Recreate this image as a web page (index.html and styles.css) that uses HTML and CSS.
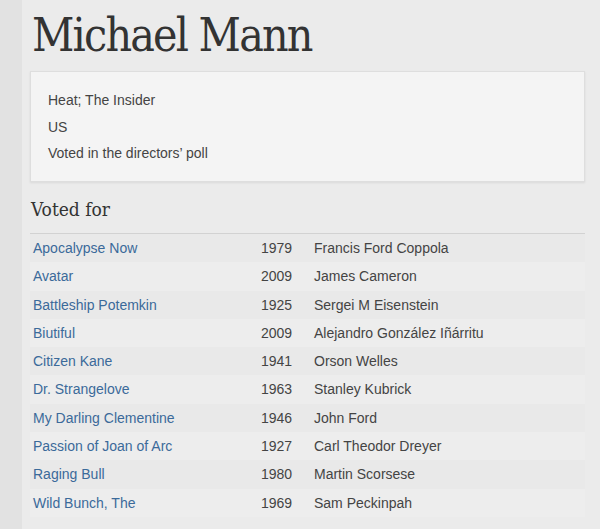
FILE: index.html
```html
<!DOCTYPE html>
<html lang="en">
<head>
  <meta charset="UTF-8">
  <meta name="viewport" content="width=device-width, initial-scale=1.0">
  <title>Michael Mann</title>
  <link rel="stylesheet" href="styles.css">
</head>
<body>
  <div class="page">
    <h1>Michael Mann</h1>

    <div class="info">
      <p>Heat; The Insider</p>
      <p>US</p>
      <p>Voted in the directors’ poll</p>
    </div>

    <h2>Voted for</h2>

    <table class="votes">
      <tr><td class="title"><a href="#">Apocalypse Now</a></td><td class="year">1979</td><td>Francis Ford Coppola</td></tr>
      <tr><td class="title"><a href="#">Avatar</a></td><td class="year">2009</td><td>James Cameron</td></tr>
      <tr><td class="title"><a href="#">Battleship Potemkin</a></td><td class="year">1925</td><td>Sergei M Eisenstein</td></tr>
      <tr><td class="title"><a href="#">Biutiful</a></td><td class="year">2009</td><td>Alejandro González Iñárritu</td></tr>
      <tr><td class="title"><a href="#">Citizen Kane</a></td><td class="year">1941</td><td>Orson Welles</td></tr>
      <tr><td class="title"><a href="#">Dr. Strangelove</a></td><td class="year">1963</td><td>Stanley Kubrick</td></tr>
      <tr><td class="title"><a href="#">My Darling Clementine</a></td><td class="year">1946</td><td>John Ford</td></tr>
      <tr><td class="title"><a href="#">Passion of Joan of Arc</a></td><td class="year">1927</td><td>Carl Theodor Dreyer</td></tr>
      <tr><td class="title"><a href="#">Raging Bull</a></td><td class="year">1980</td><td>Martin Scorsese</td></tr>
      <tr><td class="title"><a href="#">Wild Bunch, The</a></td><td class="year">1969</td><td>Sam Peckinpah</td></tr>
    </table>
  </div>
</body>
</html>
```

FILE: styles.css
```css
* {
  margin: 0;
  padding: 0;
  box-sizing: border-box;
}

body {
  background: #e2e2e2;
  font-family: 'Liberation Sans', Arial, sans-serif;
  color: #444;
  font-size: 14px;
}

.page {
  margin-left: 22px;
  min-height: 100vh;
  background: #ebebeb;
  padding: 6px 15px 0 8px;
}

h1 {
  font-family: 'DejaVu Serif', serif;
  font-stretch: condensed;
  font-weight: normal;
  font-size: 46px;
  line-height: 58px;
  color: #333;
  letter-spacing: -1.8px;
  margin-left: 2px;
}

.info {
  margin-top: 7px;
  background: #f4f4f4;
  border: 1px solid #dedede;
  box-shadow: 0 1px 2px rgba(0, 0, 0, 0.08);
  padding: 15px 17px 16px;
  height: 111px;
}

.info p {
  line-height: 26.5px;
}

h2 {
  font-family: 'DejaVu Serif', serif;
  font-stretch: condensed;
  font-weight: normal;
  font-size: 19px;
  color: #333;
  margin-top: 16px;
  padding: 0 1px 13px;
  border-bottom: 1px solid #d2d2d2;
}

.votes {
  width: 100%;
  border-collapse: collapse;
}

.votes td {
  padding: 4px 3px;
  line-height: 20.3px;
}

.votes tr:nth-child(even) {
  background: rgba(255, 255, 255, 0.12);
}

.votes tr:nth-child(odd) {
  background: rgba(0, 0, 0, 0.008);
}

.votes .title {
  width: 228px;
}

.votes .year {
  width: 53px;
}

.votes a {
  color: #3b6a9a;
  text-decoration: none;
}
```
